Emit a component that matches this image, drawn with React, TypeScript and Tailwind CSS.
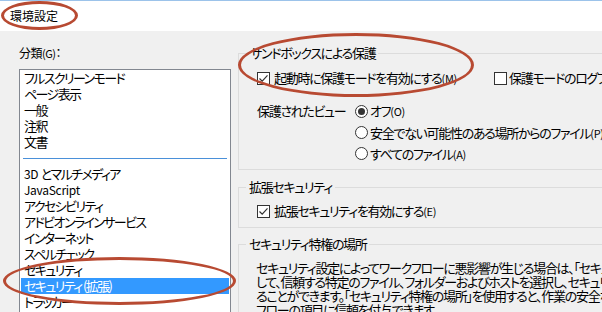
import React from "react";

const jp = `font-['Noto_Sans_CJK_JP','Noto_Sans',sans-serif] [font-feature-settings:"palt"]`;

function CheckBox({ checked }: { checked?: boolean }) {
  return (
    <span className="w-[13px] h-[13px] border border-[#333] bg-white flex items-center justify-center shrink-0">
      {checked && (
        <svg width="11" height="11" viewBox="0 0 11 11">
          <path d="M1.5 5.5 L4.2 8.2 L9.5 2.4" stroke="#333" strokeWidth="1.2" fill="none" />
        </svg>
      )}
    </span>
  );
}

function Radio({ on }: { on?: boolean }) {
  return (
    <span className="w-[13px] h-[13px] rounded-full border border-[#333] bg-white flex items-center justify-center shrink-0">
      {on && <span className="w-[7px] h-[7px] rounded-full bg-[#333]" />}
    </span>
  );
}

function Key({ k }: { k: string }) {
  return <span className="text-[11px] tracking-[-0.3px]">({k})</span>;
}

const topItems = ["フルスクリーンモード", "ページ表示", "一般", "注釈", "文書"];
const bottomItems = [
  "3D とマルチメディア",
  "JavaScript",
  "アクセシビリティ",
  "アドビオンラインサービス",
  "インターネット",
  "スペルチェック",
  "セキュリティ",
  "セキュリティ (拡張)",
  "トラッカー",
];

export default function App() {
  return (
    <div className={`relative w-[602px] h-[312px] overflow-hidden bg-[#f0f0f0] text-black text-[13px] tracking-[-1.3px] ${jp}`}>
      {/* Title bar */}
      <div className="h-[31px] bg-white border-t border-[#9cc3ea] flex items-center pl-[10px] text-[12px] tracking-normal">
        環境設定
      </div>

      <div className="flex">
        {/* Category list */}
        <div className="w-[238px] shrink-0 pl-[19px] pt-[14px]">
          <div className="leading-4 text-[12px] tracking-[-0.5px]">
            分類<span className="text-[11px]">(G)</span>：
          </div>
          <div className="mt-2 w-[212px] h-[260px] bg-white border border-[#828790] px-px tracking-[-1.6px]">
            {topItems.map((t) => (
              <div key={t} className="h-4 leading-4 pl-[3px] whitespace-nowrap">
                {t}
              </div>
            ))}
            <div className="h-4 flex items-center px-[2px]">
              <div className="w-full h-px bg-[#4a90d9]" />
            </div>
            {bottomItems.map((t) => (
              <div
                key={t}
                className={`h-4 leading-4 pl-[3px] whitespace-nowrap ${
                  t === "JavaScript" ? "text-[12px] tracking-[-0.3px]" : ""
                } ${t === "セキュリティ (拡張)" ? "bg-[#3399ff] text-white" : ""}`}
              >
                {t === "3D とマルチメディア" ? (
                  <>
                    <span className="text-[12px] tracking-[-0.3px]">3D </span>とマルチメディア
                  </>
                ) : (
                  t
                )}
              </div>
            ))}
          </div>
        </div>

        {/* Settings */}
        <div className="w-[400px] shrink-0 pt-[14px]">
          <fieldset className="border border-[#dcdcdc] pl-[18px] pt-[9px] pb-[5px]">
            <legend className="-ml-[10px] px-[3px] leading-4">サンドボックスによる保護</legend>
            <div className="flex items-center h-4">
              <div className="w-[237px] flex items-center gap-1 shrink-0">
                <CheckBox checked />
                <span className="whitespace-nowrap">
                  起動時に保護モードを有効にする<Key k="M" />
                </span>
              </div>
              <div className="flex items-center gap-[2px]">
                <CheckBox />
                <span className="whitespace-nowrap">
                  保護モードのログファイルを作成<Key k="L" />
                </span>
              </div>
            </div>
            <div className="flex mt-[14px]">
              <div className="w-[98px] shrink-0 h-[22px] flex items-center whitespace-nowrap">
                保護されたビュー
              </div>
              <div className="flex flex-col">
                <div className="h-[22px] flex items-center gap-[2px]">
                  <Radio on />
                  <span className="whitespace-nowrap">
                    オフ<Key k="O" />
                  </span>
                </div>
                <div className="h-[21px] flex items-center gap-[2px]">
                  <Radio />
                  <span className="whitespace-nowrap">
                    安全でない可能性のある場所からのファイル<Key k="P" />
                  </span>
                </div>
                <div className="h-[21px] flex items-center gap-[2px]">
                  <Radio />
                  <span className="whitespace-nowrap">
                    すべてのファイル<Key k="A" />
                  </span>
                </div>
              </div>
            </div>
          </fieldset>

          <fieldset className="mt-[9px] border border-[#dcdcdc] pl-[18px] pt-[8px] pb-[8px]">
            <legend className="-ml-[11px] px-[3px] leading-4">拡張セキュリティ</legend>
            <div className="flex items-center h-4 gap-1">
              <CheckBox checked />
              <span className="whitespace-nowrap">
                拡張セキュリティを有効にする<Key k="E" />
              </span>
            </div>
          </fieldset>

          <fieldset className="mt-[8px] border border-[#dcdcdc] pl-[17px] pt-[9px] h-[120px]">
            <legend className="-ml-[10px] px-[3px] leading-4">セキュリティ特権の場所</legend>
            <div className="leading-[14px] whitespace-nowrap">
              <div>セキュリティ設定によってワークフローに悪影響が生じる場合は、「セキュリティ特権の場所」を使用</div>
              <div>して、信頼する特定のファイル、フォルダーおよびホストを選択し、セキュリティ設定を回避す</div>
              <div>ることができます。「セキュリティ特権の場所」を使用すると、作業の安全なワーク</div>
              <div>フローの項目に信頼を付与できます。</div>
            </div>
          </fieldset>
        </div>
      </div>

      {/* Red annotation ovals */}
      <div className="absolute left-[1px] top-[1px] w-[77px] h-[29px] rounded-[50%] border-[3px] border-[#b84a32]" />
      <div className="absolute left-[3px] top-[257px] w-[233px] h-[48px] rounded-[50%] border-[3px] border-[#b84a32]" />
      <div className="absolute left-[238px] top-[33px] w-[236px] h-[64px] rounded-[50%] border-[3px] border-[#b84a32]" />
    </div>
  );
}
